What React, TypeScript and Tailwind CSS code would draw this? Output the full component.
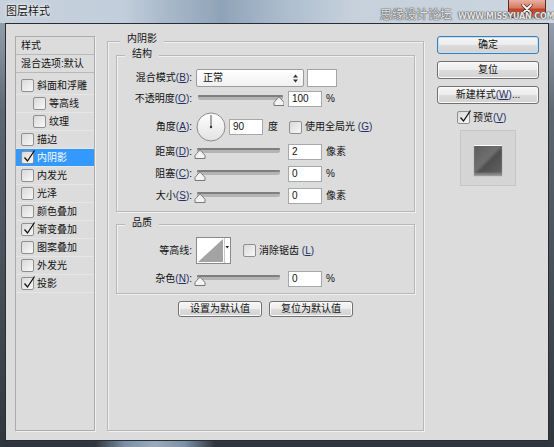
import React from "react";

function Mn({ k }: { k: string }) {
	return (
		<span className="text-[#1f3063]">
			(<u className="underline-offset-1">{k}</u>)
		</span>
	);
}

function Check({ on }: { on?: boolean }) {
	return (
		<span className="relative block h-[13px] w-[13px] shrink-0 rounded-[2px] border border-[#8e8f8f] bg-[linear-gradient(135deg,#d9d9d9,#f8f8f8)]">
			{on && (
				<svg
					className="absolute -top-[3px] left-[1px] overflow-visible"
					width="13"
					height="14"
					viewBox="0 0 13 14"
				>
					<path d="M1.5 8.5 L4.5 12 L11.5 1.5" fill="none" stroke="#111" strokeWidth="1.3" />
				</svg>
			)}
		</span>
	);
}

function Slider({ x0, x1, thumb }: { x0: number; x1: number; thumb: number }) {
	return (
		<svg width="90" height="16" className="shrink-0">
			<rect x={x0} y="4" width={x1 - x0} height="5" rx="2.5" fill="#b4b4b4" />
			<rect x={x0} y="4" width={x1 - x0} height="2" rx="1" fill="#7e7e7e" />
			<path
				d={`M${thumb - 5} 14.5 V11.5 Q${thumb - 1} 6.5 ${thumb} 6.5 Q${thumb + 1} 6.5 ${thumb + 5} 11.5 V14.5 Z`}
				fill="#f3f3f3"
				stroke="#777"
			/>
		</svg>
	);
}

function Num({ v }: { v: string }) {
	return (
		<span className="flex h-[16px] w-[34px] shrink-0 items-center border border-[#a5a8ad] bg-white pl-[3px] leading-none">
			{v}
		</span>
	);
}

function Label({ children }: { children: React.ReactNode }) {
	return <span className="w-[75px] shrink-0 text-right leading-none">{children}</span>;
}

function Btn({ children, primary, className }: { children: React.ReactNode; primary?: boolean; className?: string }) {
	return (
		<div
			className={
				"flex items-center justify-center rounded-[3px] border bg-[linear-gradient(180deg,#f6f6f6_0%,#ececec_50%,#dcdcdc_51%,#d2d2d2_100%)] leading-none " +
				(primary
					? "border-[#3c7fb1] shadow-[inset_0_0_0_1px_#bfe2f8] "
					: "border-[#707070] shadow-[inset_0_0_0_1px_#fbfbfb] ") +
				(className ?? "")
			}
		>
			{children}
		</div>
	);
}

const layers: { name: string; on?: boolean; indent?: boolean; sel?: boolean }[] = [
	{ name: "斜面和浮雕" },
	{ name: "等高线", indent: true },
	{ name: "纹理", indent: true },
	{ name: "描边" },
	{ name: "内阴影", on: true, sel: true },
	{ name: "内发光" },
	{ name: "光泽" },
	{ name: "颜色叠加" },
	{ name: "渐变叠加", on: true },
	{ name: "图案叠加" },
	{ name: "外发光" },
	{ name: "投影", on: true },
];

export default function App() {
	return (
		<div className="relative h-[447px] w-[554px] overflow-hidden bg-[linear-gradient(180deg,#9fadba_0%,#5d6770_25%,#30363d_100%)] text-[10px] text-[#111] [font-family:'Liberation_Sans','Noto_Sans_CJK_SC',sans-serif]">
			{/* title bar */}
			<div className="flex h-[23px] items-center bg-[linear-gradient(90deg,#c6d1dc_0%,#c2cedb_22%,#a9b9ca_30%,#8fa3b8_40%,#aebecf_52%,#c6d1dc_64%,#cbd6e0_100%)] pl-[6px]">
				<span className="text-[11px] leading-none text-[#151515] [text-shadow:0_0_4px_#fff,0_0_2px_#fff]">
					图层样式
				</span>
			</div>
			<div className="absolute right-[8px] top-0 flex h-[18px] w-[38px] items-center justify-center rounded-b-[4px] border border-t-0 border-[#5e2a22] bg-[linear-gradient(180deg,#eab0a2_0%,#d77a64_45%,#c4432a_55%,#d46a4c_100%)]">
				<svg width="12" height="10" viewBox="0 0 12 10">
					<path d="M2 1 L10 9 M10 1 L2 9" stroke="#4a2018" strokeWidth="3.2" strokeLinecap="round" />
					<path d="M2 1 L10 9 M10 1 L2 9" stroke="#fff" strokeWidth="1.8" strokeLinecap="round" />
				</svg>
			</div>
			<div className="absolute left-[380px] top-[9px] flex items-end gap-[6px] whitespace-nowrap text-[#e4e4e4] [text-shadow:0_0_1px_#4a4a4a,0_0_1px_#4a4a4a,0_0_2px_#777]">
				<span className="text-[12px] leading-none">思缘设计论坛</span>
				<span className="text-[8px] font-bold leading-none tracking-[-0.2px] [font-family:'DejaVu_Sans',sans-serif]">
					WWW.MISSYUAN.COM
				</span>
			</div>

			{/* body */}
			<div className="flex px-[5px]">
				<div className="flex h-[418px] w-[544px] items-start border border-[#272d33] bg-[#dcdcdc] pl-[9px]">
					{/* styles list */}
					<div className="mt-[12px] h-[395px] w-[80px] shrink-0 border border-[#acacac] shadow-[1px_1px_0_#f0f0f0]">
						<div className="flex h-[18px] items-center border-b border-[#b9b9b9] pl-[5px] leading-none">样式</div>
						<div className="flex h-[18px] items-center border-b border-[#b9b9b9] pl-[5px] leading-none">
							混合选项:默认
						</div>
						<div className="pt-[4px]">
							{layers.map((l) => (
								<div
									key={l.name}
									className={
										"flex h-[18px] items-center gap-[3px] border-b border-[#e6e6e6] leading-none " +
										(l.indent ? "pl-[17px] " : "pl-[5px] ") +
										(l.sel ? "bg-[#3399ff] text-white" : "")
									}
								>
									<Check on={l.on} />
									<span>{l.name}</span>
								</div>
							))}
						</div>
					</div>

					{/* inner shadow settings */}
					<div className="ml-[12px] mt-[17px] h-[390px] w-[317px] shrink-0 border border-[#b8b8b8] shadow-[inset_1px_1px_0_#f0f0f0,1px_1px_0_#f0f0f0]">
						<div className="-mt-[10px] ml-[12px] w-fit bg-[#dcdcdc] px-[7px] leading-[14px]">内阴影</div>

						<div className="mx-[8px] mt-[9px] border border-[#b8b8b8] pb-[7px] shadow-[inset_1px_1px_0_#f0f0f0,1px_1px_0_#f0f0f0]">
							<div className="-mt-[9px] ml-[8px] w-fit bg-[#dcdcdc] px-[7px] leading-[14px]">结构</div>

							<div className="mt-[8px] flex h-[18px] items-center">
								<Label>
									混合模式<Mn k="B" />:
								</Label>
								<div className="ml-[4px] flex h-[18px] w-[108px] items-center justify-between rounded-[2px] border border-[#9c9c9c] bg-[linear-gradient(180deg,#ffffff,#f1f1f1)] pl-[6px] pr-[5px] leading-none">
									<span>正常</span>
									<svg width="5" height="9" viewBox="0 0 5 9">
										<path d="M0 3.5 L2.5 0.5 L5 3.5 Z M0 5.5 L2.5 8.5 L5 5.5 Z" fill="#333" />
									</svg>
								</div>
								<div className="ml-[3px] h-[18px] w-[30px] border border-[#a5a5a5] bg-white" />
							</div>

							<div className="mt-[4px] flex h-[16px] items-center">
								<Label>
									不透明度<Mn k="O" />:
								</Label>
								<span className="ml-[2px] flex">
									<Slider x0={4} x1={89} thumb={85} />
								</span>
								<span className="ml-[4px]">
									<Num v="100" />
								</span>
								<span className="ml-[4px] leading-none">%</span>
							</div>

							<div className="mt-[5px] flex h-[30px] items-center">
								<Label>
									角度<Mn k="A" />:
								</Label>
								<svg className="ml-[4px] shrink-0" width="30" height="30" viewBox="0 0 30 30">
									<defs>
										<linearGradient id="dial" x1="0" y1="0" x2="0" y2="1">
											<stop offset="0" stopColor="#ffffff" />
											<stop offset="1" stopColor="#e2e2e2" />
										</linearGradient>
									</defs>
									<circle cx="15" cy="15" r="14" fill="url(#dial)" stroke="#8c8c8c" />
									<line x1="15" y1="15" x2="15" y2="3" stroke="#555" strokeWidth="1" />
									<circle cx="15" cy="15" r="1.2" fill="#333" />
								</svg>
								<span className="ml-[3px]">
									<Num v="90" />
								</span>
								<span className="ml-[5px] leading-none">度</span>
								<span className="ml-[11px]">
									<Check />
								</span>
								<span className="ml-[3px] leading-none">
									使用全局光 <Mn k="G" />
								</span>
							</div>

							{[
								{ l: "距离", k: "D", v: "2", u: "像素" },
								{ l: "阻塞", k: "C", v: "0", u: "%" },
								{ l: "大小", k: "S", v: "0", u: "像素" },
							].map((r, i) => (
								<div key={r.k} className={(i === 0 ? "mt-[2px]" : "mt-[6px]") + " flex h-[16px] items-center"}>
									<Label>
										{r.l}
										<Mn k={r.k} />:
									</Label>
									<span className="ml-[2px] flex">
										<Slider x0={3} x1={86} thumb={6} />
									</span>
									<span className="ml-[4px]">
										<Num v={r.v} />
									</span>
									<span className="ml-[4px] leading-none">{r.u}</span>
								</div>
							))}
						</div>

						<div className="mx-[8px] mt-[12px] border border-[#b8b8b8] pb-[6px] shadow-[inset_1px_1px_0_#f0f0f0,1px_1px_0_#f0f0f0]">
							<div className="-mt-[9px] ml-[8px] w-fit bg-[#dcdcdc] px-[7px] leading-[14px]">品质</div>

							<div className="mt-[7px] flex h-[27px] items-center">
								<Label>等高线:</Label>
								<svg className="ml-[4px] shrink-0" width="35" height="27" viewBox="0 0 35 27">
									<rect x="0.5" y="0.5" width="34" height="26" fill="#fff" stroke="#8a8a8a" />
									<path d="M2 25 L27 2 L27 25 Z" fill="#a3a3a3" />
									<line x1="28.5" y1="1" x2="28.5" y2="26" stroke="#c8c8c8" />
									<path d="M29.5 9 L33 9 L31.25 11.5 Z" fill="#222" />
								</svg>
								<span className="ml-[12px]">
									<Check />
								</span>
								<span className="ml-[3px] leading-none">
									消除锯齿 <Mn k="L" />
								</span>
							</div>

							<div className="mt-[7px] flex h-[16px] items-center">
								<Label>
									杂色<Mn k="N" />:
								</Label>
								<span className="ml-[2px] flex">
									<Slider x0={3} x1={86} thumb={6} />
								</span>
								<span className="ml-[4px]">
									<Num v="0" />
								</span>
								<span className="ml-[4px] leading-none">%</span>
							</div>
						</div>

						<div className="mt-[7px] flex justify-center gap-[7px]">
							<Btn className="h-[16px] w-[84px]">设置为默认值</Btn>
							<Btn className="h-[16px] w-[84px]">复位为默认值</Btn>
						</div>
					</div>

					{/* right column */}
					<div className="ml-[13px] mt-[12px] flex w-[102px] shrink-0 flex-col">
						<Btn primary className="h-[18px]">
							确定
						</Btn>
						<Btn className="mt-[7px] h-[18px]">复位</Btn>
						<Btn className="mt-[7px] h-[18px]">
							新建样式<Mn k="W" />
							...
						</Btn>
						<div className="mt-[7px] flex h-[13px] items-center pl-[20px]">
							<Check on />
							<span className="ml-[3px] leading-none">
								预览<Mn k="V" />
							</span>
						</div>
						<div className="ml-[23px] mt-[6px] flex h-[56px] w-[56px] justify-center border border-[#c6c6c6] bg-[#d5d5d5] pt-[14px]">
							<div className="h-[30px] w-[28px] border-t border-white bg-[linear-gradient(135deg,#5c5c5c_0%,#6f6f6f_45%,#4f4f4f_55%,#636363_100%)] shadow-[inset_0_-2px_2px_#8a8a8a,0_1px_1px_#9a9a9a]" />
						</div>
					</div>
				</div>
			</div>
			{/* bottom frame highlight */}
			<div className="absolute bottom-0 left-[95px] h-[6px] w-[120px] bg-[linear-gradient(90deg,transparent,#9bb6d3,#c9dcee,#9bb6d3,transparent)] opacity-70" />
		</div>
	);
}
